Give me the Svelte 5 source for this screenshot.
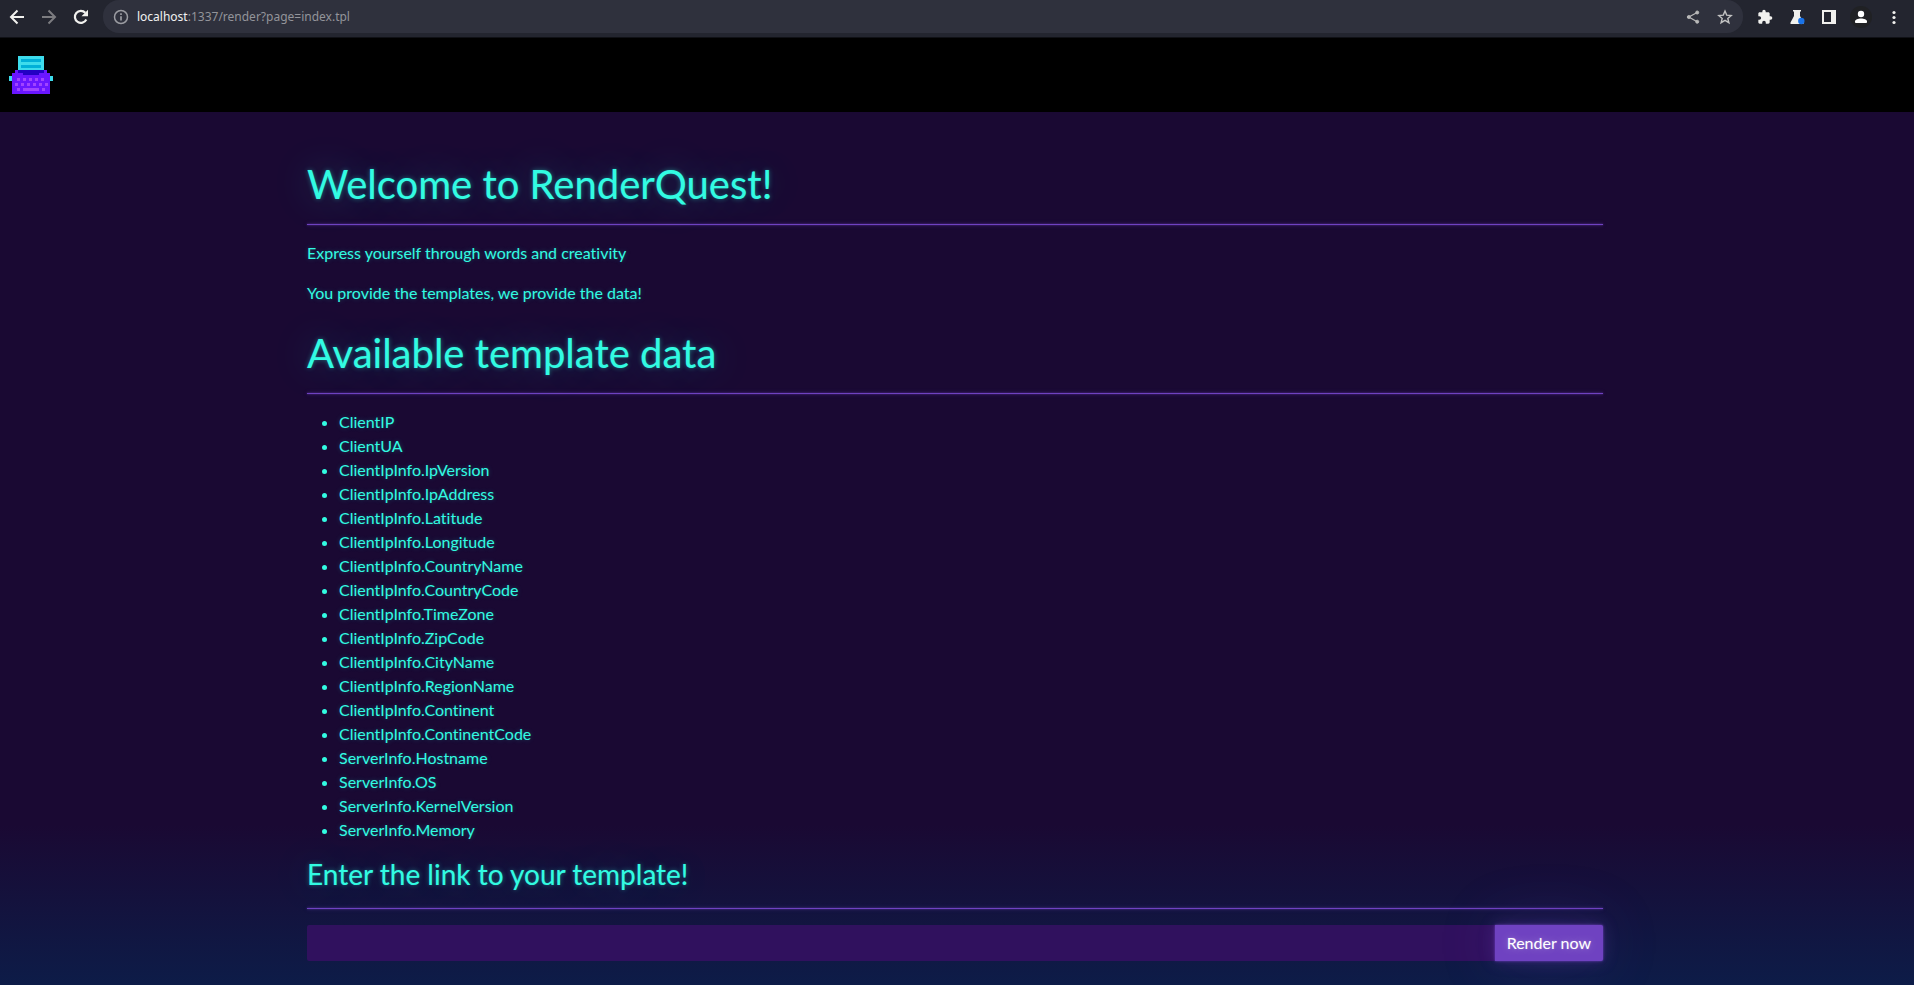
<script>
  const fields = [
    'ClientIP', 'ClientUA', 'ClientIpInfo.IpVersion', 'ClientIpInfo.IpAddress',
    'ClientIpInfo.Latitude', 'ClientIpInfo.Longitude', 'ClientIpInfo.CountryName',
    'ClientIpInfo.CountryCode', 'ClientIpInfo.TimeZone', 'ClientIpInfo.ZipCode',
    'ClientIpInfo.CityName', 'ClientIpInfo.RegionName', 'ClientIpInfo.Continent',
    'ClientIpInfo.ContinentCode', 'ServerInfo.Hostname', 'ServerInfo.OS',
    'ServerInfo.KernelVersion', 'ServerInfo.Memory'
  ];
  const keys = [
    [51, 234], [69, 234], [87, 234], [105, 234], [123, 234],
    [45, 249], [63, 249], [81, 249], [99, 249], [117, 249], [135, 249],
    [51, 264], [126, 264]
  ];
  let link = $state('');
</script>

<div class="page">
  <div class="toolbar">
    <button class="tool" aria-label="Back">
      <svg width="16" height="16" viewBox="0 0 16 16" fill="none" stroke="#f1f1ee" stroke-width="2"><path d="M15 8H2.500M8.500 1.500 2 8l6.500 6.500" /></svg>
    </button>
    <button class="tool" aria-label="Forward">
      <svg width="16" height="16" viewBox="0 0 16 16" fill="none" stroke="#7c7c80" stroke-width="2"><path d="M1 8h12.500M7.500 1.500 14 8l-6.500 6.500" /></svg>
    </button>
    <button class="tool" aria-label="Reload">
      <svg width="16" height="16" viewBox="0 0 16 16"><path d="M13.300 10.500A6 6 0 1 1 12.300 3.800" fill="none" stroke="#f1f1ee" stroke-width="2.200" /><path d="M15 .8v6.500H8.500z" fill="#f1f1ee" /></svg>
    </button>
    <div class="address">
      <svg width="16" height="16" viewBox="0 0 16 16" fill="none" stroke="#9b9ca2" stroke-width="1.500"><circle cx="8" cy="8" r="6.500" /><path d="M8 7.200v4.300M8 4.200v1.700" stroke-width="1.700" /></svg>
      <span class="url"><b>localhost</b>:1337/render?page=index.tpl</span>
      <button class="tool" aria-label="Share">
        <svg width="16" height="16" viewBox="0 0 16 16" stroke="#b9b9b9" fill="#b9b9b9"><path d="M12.200 3.500 3.800 8l8.400 4.700" fill="none" stroke-width="1.300" /><circle cx="12.200" cy="3.500" r="1.500" /><circle cx="3.800" cy="8" r="1.500" /><circle cx="12.200" cy="12.700" r="1.500" /></svg>
      </button>
      <button class="tool" aria-label="Bookmark">
        <svg width="16" height="16" viewBox="0 0 16 16" fill="none" stroke="#c2c2c2" stroke-width="1.400"><path d="m8 2 1.700 4.100 4.500.4-3.400 2.900 1.100 4.300L8 11.300l-3.900 2.400 1.100-4.300L1.800 6.500l4.500-.4z" /></svg>
      </button>
    </div>
    <div class="actions">
      <button class="tool" aria-label="Extensions">
        <svg width="16" height="16" viewBox="0 0 24 24" fill="#f1f1ee"><path d="M20.500 11H19V7c0-1.100-.9-2-2-2h-4V3.500a2.500 2.500 0 0 0-5 0V5H4c-1.100 0-2 .9-2 2v3.800h1.500a2.700 2.700 0 0 1 0 5.400H2V20c0 1.100.9 2 2 2h3.800v-1.500a2.700 2.700 0 0 1 5.400 0V22H17c1.100 0 2-.9 2-2v-4h1.500a2.500 2.500 0 0 0 0-5z" /></svg>
      </button>
      <button class="tool" aria-label="Labs">
        <svg width="16" height="16" viewBox="0 0 16 16"><path d="M4 1h8v1.500h-1V7l3.500 6.500V15h-13v-1.500L5 7V2.500H4z" fill="#f1f1ee" /><circle cx="12.300" cy="12" r="3.200" fill="#1a73e8" /></svg>
      </button>
      <button class="tool" aria-label="Side panel">
        <svg width="16" height="16" viewBox="0 0 16 16"><path d="M1 1h14v14H1zM3 3v10h7V3z" fill="#f1f1ee" fill-rule="evenodd" /></svg>
      </button>
      <button class="tool profile" aria-label="Profile">
        <svg width="16" height="16" viewBox="0 0 16 16" fill="#fff"><circle cx="8" cy="5" r="3.200" /><path d="M2 14v-1.500C2 10.500 5 9.500 8 9.500s6 1 6 3V14z" /></svg>
      </button>
      <button class="tool" aria-label="Menu">
        <svg width="16" height="16" viewBox="0 0 16 16" fill="#f1f1ee"><circle cx="8" cy="3.500" r="1.600" /><circle cx="8" cy="8.500" r="1.600" /><circle cx="8" cy="13.500" r="1.600" /></svg>
      </button>
    </div>
  </div>

  <nav>
    <a href="/" aria-label="RenderQuest">
      <svg width="44" height="38" viewBox="27 168 132 114" shape-rendering="crispEdges">
        <path fill="#3ddcec" d="M54 168h78v42H54zM27 228h9v15h-9zM150 228h9v15h-9z" />
        <path fill="#00b0d8" d="M63 177h60v9H63zM63 195h60v9H63z" />
        <path fill="#6a16ff" d="M45 210h96v9h9v63H36v-63h9z" />
        <path fill="#2400c4" d="M54 210h78v9h-15v6H69v-6H54z" />
        {#each keys as [x, y]}
          <rect {x} {y} width="9" height="9" fill="#a044ff" />
        {/each}
        <rect x="69" y="264" width="48" height="9" fill="#a044ff" />
      </svg>
    </a>
  </nav>

  <main>
    <div class="container">
      <h1>Welcome to RenderQuest!</h1>
      <hr />
      <p>Express yourself through words and creativity</p>
      <p>You provide the templates, we provide the data!</p>
      <h1>Available template data</h1>
      <hr />
      <ul>
        {#each fields as field}
          <li>{field}</li>
        {/each}
      </ul>
      <h3><label for="link">Enter the link to your template!</label></h3>
      <hr />
      <form onsubmit={(e) => e.preventDefault()}>
        <input id="link" type="text" bind:value={link} />
        <button type="submit">Render now</button>
      </form>
    </div>
  </main>
</div>

<style>
  :global(body) {
    margin: 0;
    background: #1a0933;
  }
  .page {
    display: flex;
    flex-direction: column;
    min-height: 100vh;
    font: 400 16px/24px Lato, sans-serif;
    font-variant-ligatures: none;
    color: #32fbe2;
  }
  button {
    font: inherit;
    border: 0;
    cursor: pointer;
  }
  svg {
    display: block;
  }
  .toolbar {
    display: flex;
    align-items: center;
    box-sizing: border-box;
    height: 38px;
    padding: 0 8px 4px 1px;
    background: #23252f;
    border-bottom: 1px solid #101116;
  }
  .tool {
    display: flex;
    align-items: center;
    justify-content: center;
    width: 32px;
    height: 24px;
    padding: 0;
    background: none;
  }
  .address {
    display: flex;
    flex: 1;
    align-items: center;
    height: 33px;
    margin-left: 6px;
    padding: 0 2px 0 10px;
    background: #2f313d;
    border-radius: 16px;
  }
  .url {
    flex: 1;
    margin-left: 8px;
    color: #93949a;
    font: 400 12px/20px "Noto Sans", sans-serif;
  }
  .url b {
    color: #f1f1f1;
    font-weight: 400;
  }
  .actions {
    display: flex;
    margin-left: 6px;
  }
  .actions .tool:last-child {
    width: 24px;
    margin-left: 5px;
  }
  .profile svg {
    padding: 3px;
    background: #202124;
    border-radius: 50%;
  }
  nav {
    display: flex;
    align-items: center;
    height: 74px;
    padding: 0 9px;
    background: #000;
  }
  main {
    flex: 1;
    padding: 48px 16px 24px 12px;
    background: linear-gradient(#1a0933 0, #1a0933 calc(100% - 160px), #0d1c48 100%);
  }
  .container {
    max-width: 1296px;
    margin: 0 auto;
    text-shadow: 0 0 2px rgba(50, 251, 226, 0.1), 0 0 5px rgba(50, 251, 226, 0.25);
  }
  h1,
  h3 {
    margin: 24px 0 16px;
    font-weight: 400;
    text-shadow: 0 0 1px rgba(50, 251, 226, 0.3), 0 0 5px rgba(50, 251, 226, 0.4), 0 0 40px rgba(50, 251, 226, 0.3);
  }
  h1 {
    font-size: 40px;
    line-height: 48px;
  }
  h1:first-child {
    margin-top: 0;
  }
  h3 {
    margin: 16px 0 18px;
    font-size: 28px;
    line-height: 32px;
  }
  hr {
    height: 1px;
    margin: 16px 0;
    border: 0;
    background: #6f42c1;
    box-shadow: 0 0 2px rgba(111, 66, 193, 0.9), 0 0 4px rgba(111, 66, 193, 0.4);
  }
  p {
    margin: 0 0 16px;
  }
  ul {
    margin: 0 0 16px;
    padding-left: 32px;
  }
  form {
    display: flex;
  }
  input {
    flex: 1;
    min-width: 0;
    box-sizing: border-box;
    height: 36px;
    padding: 6px 12px;
    border: 0;
    border-radius: 2px 0 0 2px;
    background: #30115e;
    color: #32fbe2;
    font: inherit;
  }
  form button {
    height: 36px;
    padding: 6px 12px;
    border-radius: 0 2px 2px 0;
    background: #6f42c1;
    color: #fff;
    box-shadow: 0 0 2px rgba(111, 66, 193, 0.9), 0 0 4px rgba(111, 66, 193, 0.4), 0 0 16px rgba(111, 66, 193, 0.3), 0 0 64px rgba(111, 66, 193, 0.2);
    text-shadow: 0 0 2px rgba(255, 255, 255, 0.3), 0 0 8px rgba(255, 255, 255, 0.3);
  }
</style>
